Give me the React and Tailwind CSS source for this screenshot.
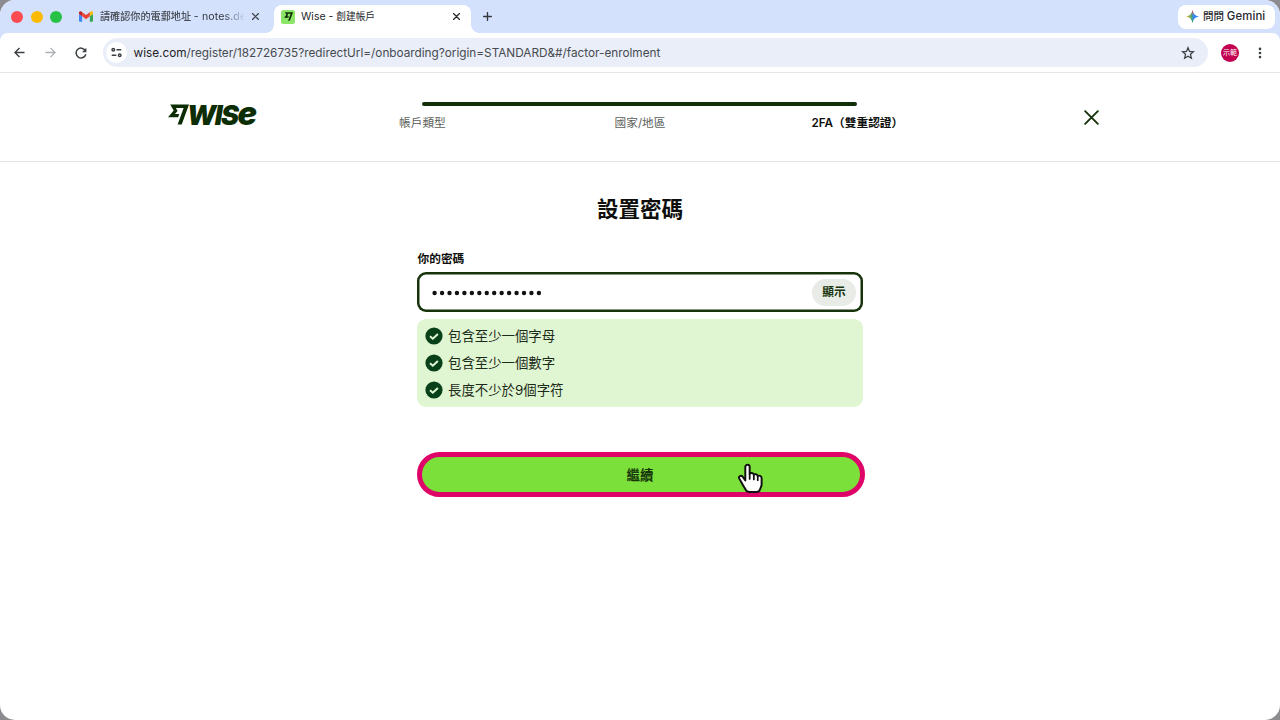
import React from "react";

const requirements = ["包含至少一個字母", "包含至少一個數字", "長度不少於9個字符"];

function WiseFlag({ className }) {
  return (
    <svg viewBox="0 0 24 24" className={className} fill="currentColor">
      <path d="M6.488 7.469 0 15.05h11.585l1.301-3.576H7.922l3.033-3.507.01-.092L8.993 4.48h8.873l-6.878 18.925h4.706L24 .595H2.543l3.945 6.874Z" />
    </svg>
  );
}

function GmailIcon() {
  return (
    <svg viewBox="52 42 88 66" className="h-[11px] w-[14px] shrink-0">
      <path fill="#4285f4" d="M58 108h14V74L52 59v43c0 3.32 2.69 6 6 6" />
      <path fill="#34a853" d="M120 108h14c3.32 0 6-2.69 6-6V59l-20 15" />
      <path fill="#fbbc04" d="M120 48v26l20-15v-8c0-7.42-8.47-11.65-14.4-7.2" />
      <path fill="#ea4335" d="M72 74V48l24 18 24-18v26L96 92" />
      <path fill="#c5221f" d="M52 51v8l20 15V48l-5.6-4.2c-5.94-4.45-14.4-.22-14.4 7.2" />
    </svg>
  );
}

function GeminiIcon() {
  return (
    <svg viewBox="0 0 24 24" className="h-[13px] w-[13px] shrink-0">
      <defs>
        <linearGradient id="gemH" x1="0" x2="1" y1="0" y2="0">
          <stop offset="0" stopColor="#f8b912" />
          <stop offset=".42" stopColor="#55a874" />
          <stop offset=".6" stopColor="#3186ff" />
          <stop offset="1" stopColor="#3186ff" />
        </linearGradient>
        <linearGradient id="gemV" x1="0" x2="0" y1="0" y2="1">
          <stop offset="0" stopColor="#f0443c" />
          <stop offset=".4" stopColor="#f0443c" stopOpacity="0" />
          <stop offset=".65" stopColor="#22a55b" stopOpacity="0" />
          <stop offset="1" stopColor="#22a55b" />
        </linearGradient>
      </defs>
      <path fill="url(#gemH)" d="M12 0C13 7 17 11 24 12 17 13 13 17 12 24 11 17 7 13 0 12 7 11 11 7 12 0Z" />
      <path fill="url(#gemV)" d="M12 0C13 7 17 11 24 12 17 13 13 17 12 24 11 17 7 13 0 12 7 11 11 7 12 0Z" />
    </svg>
  );
}

function Cross({ className, width = 1.6 }) {
  return (
    <svg viewBox="0 0 16 16" className={className} fill="none" stroke="currentColor" strokeWidth={width} strokeLinecap="round">
      <path d="M1.2 1.2 14.8 14.8M14.8 1.2 1.2 14.8" />
    </svg>
  );
}

function TabBar() {
  return (
    <div className="flex h-[33px] items-start bg-[#d3e1fd]">
      <div className="flex h-[33px] w-[63px] items-center gap-[7.5px] pl-[11px]">
        <span className="h-3 w-3 shrink-0 rounded-full bg-[#fd4b52]" />
        <span className="h-3 w-3 shrink-0 rounded-full bg-[#fcba05]" />
        <span className="h-3 w-3 shrink-0 rounded-full bg-[#26c145]" />
      </div>
      <div className="flex h-[33px] w-[211px] items-center pl-4">
        <GmailIcon />
        <span className="ml-[7px] w-[144px] text-[10.1px] leading-4 font-medium tracking-[0.03px] whitespace-nowrap text-[#474c54] [mask-image:linear-gradient(to_right,#000_86%,transparent_101%)]">
          請確認你的電郵地址 <span className="text-[10.6px] font-normal tracking-[0.1px] text-[#343940]">- notes.de</span>
        </span>
        <Cross className="ml-[8px] h-[7px] w-[7px] text-[#3c4043]" width={2.8} />
      </div>
      <div className="relative flex h-[33px] w-[197px] items-center">
        <span className="absolute bottom-0 -left-[8px] h-2 w-2 bg-[radial-gradient(circle_at_0_0,transparent_7.5px,#ffffff_8px)]" />
        <span className="absolute -right-[8px] bottom-0 h-2 w-2 bg-[radial-gradient(circle_at_100%_0,transparent_7.5px,#ffffff_8px)]" />
        <div className="mt-[5px] flex h-7 w-full items-center rounded-t-[8px] bg-white pb-[5px] pl-[7px]">
          <span className="flex h-[14px] w-[14px] items-center justify-center rounded-[2.5px] bg-[#8be566]">
            <WiseFlag className="h-[9px] w-[9px] text-[#0c2b04]" />
          </span>
          <span className="ml-[6px] w-[140px] text-[9.7px] leading-4 whitespace-nowrap text-[#24272b]">
            <span className="text-[10.5px]">Wise - </span>創建帳戶
          </span>
          <Cross className="ml-[12px] h-[7px] w-[7px] text-[#24272b]" width={2.8} />
        </div>
      </div>
      <svg viewBox="0 0 10 10" className="mt-[12px] ml-[12px] h-[9px] w-[9px]" stroke="#33373c" strokeWidth="1.5" strokeLinecap="round">
        <path d="M5 .7v8.6M.7 5h8.6" />
      </svg>
      <div className="mt-[4.5px] mr-[5px] ml-auto flex h-6 w-[97px] items-center rounded-[8px] bg-white pl-[8px]">
        <GeminiIcon />
        <span className="ml-[4px] text-[10.5px] leading-4 font-medium whitespace-nowrap text-[#24272b]">
          問問 <span className="text-[11.4px] tracking-[0.1px]">Gemini</span>
        </span>
      </div>
    </div>
  );
}

function Toolbar() {
  return (
    <div className="bg-[#d3e1fd]">
      <div className="flex h-10 items-center rounded-t-[8px] border-b border-[#e4e7e4] bg-white">
        <svg viewBox="0 0 12 12" className="ml-[14px] h-[11px] w-[11px]" fill="none" stroke="#3c4043" strokeWidth="1.5">
          <path d="M11.5 6H1.3M6 1 1 6l5 5" />
        </svg>
        <svg viewBox="0 0 12 12" className="ml-[19.5px] h-[11px] w-[11px]" fill="none" stroke="#adb0b3" strokeWidth="1.4">
          <path d="M.5 6h10.2M6 1l5 5-5 5" />
        </svg>
        <svg viewBox="0 0 12 12" className="ml-[19px] h-[12px] w-[12px]" fill="none" stroke="#3c4043" strokeWidth="1.5">
          <path d="M10.3 3.6A4.9 4.9 0 1 0 10.8 7.2" />
          <path fill="#3c4043" stroke="none" d="M11.4.8v4.4H7z" />
        </svg>
        <div className="ml-[16.5px] flex h-[29px] w-[1105px] items-center rounded-full bg-[#e9eef8] pl-[3px]">
          <span className="flex h-[21px] w-[21px] items-center justify-center rounded-full bg-white">
            <svg viewBox="0 0 12 12" className="h-[11px] w-[11px]" fill="none" stroke="#3c4043" strokeWidth="1.6">
              <circle cx="2.5" cy="3" r="1.4" />
              <path d="M6 3h5.2M.8 9h5" />
              <circle cx="9.5" cy="9" r="1.4" />
            </svg>
          </span>
          <span className="ml-[6.5px] text-[11.78px] leading-4 whitespace-nowrap text-[#474b50]">
            <span className="text-[#1f2226]">wise.com</span>/register/182726735?redirectUrl=/onboarding?origin=STANDARD&amp;#/factor-enrolment
          </span>
          <svg viewBox="0 0 24 24" className="mr-[13.5px] ml-auto h-[14px] w-[14px]" fill="none" stroke="#3c4043" strokeWidth="2.2">
            <path d="m12 3 2.6 6.3 6.8.6-5.2 4.4 1.6 6.7-5.8-3.6L6.2 21l1.6-6.7L2.6 9.9l6.8-.6Z" />
          </svg>
        </div>
        <span className="ml-[13px] flex h-[18px] w-[18px] items-center justify-center rounded-full bg-[#c20250] text-[7px] leading-none whitespace-nowrap text-white">
          示範
        </span>
        <svg viewBox="0 0 4 12" className="ml-[19px] h-[12px] w-[4px]" fill="#3c4043">
          <circle cx="2" cy="1.9" r="1.3" />
          <circle cx="2" cy="6" r="1.3" />
          <circle cx="2" cy="10.1" r="1.3" />
        </svg>
      </div>
    </div>
  );
}

function SiteHeader() {
  return (
    <header className="flex h-[89px] border-b border-[#e2e4e0] pl-[168px]">
      <div className="mt-[28px] flex h-7 w-[231px] items-center text-[#0d2d05]">
        <WiseFlag className="-mt-px h-[21px] w-[21px] shrink-0" />
        <span className="-ml-[2px] flex items-baseline text-[27px] leading-7 font-black tracking-[-1.5px] italic">
          WIS<span className="text-[32.5px]">e</span>
        </span>
      </div>
      <div className="mt-[29px] w-[498px]">
        <div className="ml-[23px] h-[3.5px] w-[435px] rounded-full bg-[#122f09]" />
        <div className="mt-[9px] flex text-[11.7px] leading-4 whitespace-nowrap text-[#5c5f5b]">
          <span className="w-[215.5px] shrink-0">帳戶類型</span>
          <span className="w-[197px] shrink-0">國家/地區</span>
          <span className="font-semibold text-[#0e0f0c]">2FA（雙重認證）</span>
        </div>
      </div>
      <Cross className="mt-[36.5px] ml-[187px] h-[15px] w-[15px] text-[#16330b]" width={2} />
    </header>
  );
}

function CheckIcon() {
  return (
    <svg viewBox="0 0 18 18" className="h-[18px] w-[18px] shrink-0">
      <circle cx="9" cy="9" r="8.6" fill="#074019" />
      <path d="m5 9.2 2.8 2.5 5.1-4.8" fill="none" stroke="#e0f6d2" strokeWidth="2" />
    </svg>
  );
}

function HandCursor() {
  return (
    <svg viewBox="0 0 26 30" className="absolute top-[6px] left-[314.5px] h-[30px] w-[27px]" preserveAspectRatio="none">
      <path
        d="M8 17.5V3.9a2 2 0 0 1 4.2 0v6.9c.6-1.3 3.600-1.1 4 .9.8-1 3.4-.6 3.8 1.3 1-.8 3.7-.3 3.7 2.2v6.200c0 2.200-1.200 3.500-1.700 5.400-.5 1.800-1.500 2.200-3.100 2.200h-6.900c-1.900 0-3-.7-3.700-2.400-.8-2-2-3.100-3-5.300L2.100 15.400c-.9-2.200 1.900-3.500 3.400-1.600Z"
        fill="#fff"
        stroke="#111"
        strokeWidth="1.9"
        strokeLinejoin="round"
      />
      <path d="M12.2 10.8v5.2M16.2 11.7v4.8M20 13v4.2" fill="none" stroke="#111" strokeWidth="1.7" strokeLinecap="round" />
    </svg>
  );
}

function PasswordForm() {
  return (
    <main className="ml-[417px] w-[446px] flex-1 text-[#0e0f0c]">
      <h1 className="mt-[31px] text-center text-[21.5px] leading-8 font-bold">設置密碼</h1>
      <div className="mt-[26px] pl-[0.5px] text-[11.7px] leading-4 font-semibold">你的密碼</div>
      <div className="mt-[5px] flex h-[40px] w-[445.5px] items-center rounded-[9px] pr-[6.5px] pl-[15px] shadow-[inset_0_0_0_2.5px_#16330b]">
        <svg viewBox="0 0 111 6" className="mt-px h-[6px] w-[111px]" fill="#111">
          {Array.from({ length: 15 }, (_, i) => (
            <circle key={i} cx={2.6 + i * 7.45} cy="3" r="2.2" />
          ))}
        </svg>
        <button className="ml-auto h-[27px] w-[44px] rounded-full bg-[#e8ebe6] text-[11.7px] leading-4 font-semibold text-[#16330b]">顯示</button>
      </div>
      <ul className="mt-[7px] flex h-[88px] w-[445.5px] flex-col gap-[9px] rounded-[9px] bg-[#e0f6d2] pt-[8px] pl-2">
        {requirements.map((item) => (
          <li key={item} className="flex h-[18px] items-center gap-[5px] text-[13.4px] leading-[18px] text-[#1c2a19]">
            <CheckIcon />
            <span>{item}</span>
          </li>
        ))}
      </ul>
      <button className="relative mt-[45px] block h-[45px] w-[448px] rounded-full border-[5px] border-[#df0468] bg-[#7ce03a] pr-[2px] text-[13.4px] leading-5 font-semibold text-[#16330b]">
        繼續
        <HandCursor />
      </button>
    </main>
  );
}

export default function App() {
  return (
    <div className="h-[720px] w-[1280px] overflow-hidden bg-[#8b8b90] font-['Inter','Noto_Sans_CJK_TC',sans-serif]">
      <div className="flex h-[720px] w-[1280px] flex-col overflow-hidden rounded-[15px] bg-white">
        <TabBar />
        <Toolbar />
        <SiteHeader />
        <PasswordForm />
      </div>
    </div>
  );
}
